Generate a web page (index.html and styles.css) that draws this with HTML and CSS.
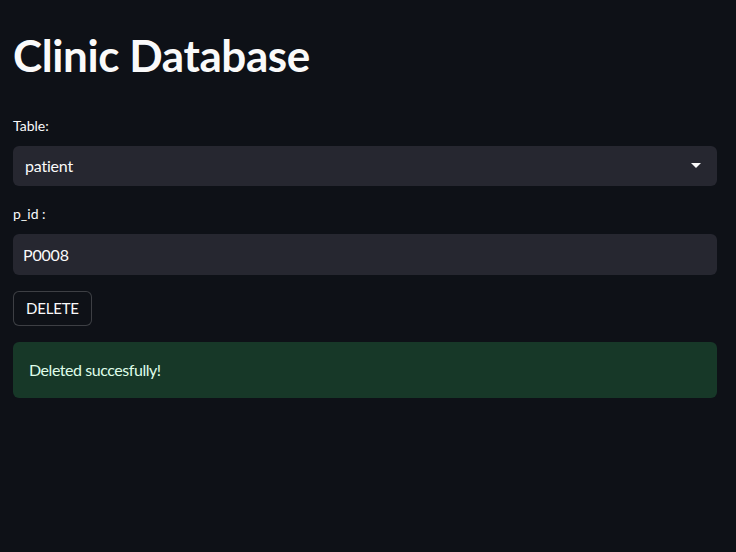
FILE: index.html
```html
<!DOCTYPE html>
<html>
<head>
<meta charset="utf-8">
<link rel="stylesheet" href="styles.css">
</head>
<body>
<main class="main">
  <h1 class="title">Clinic Database</h1>
  <div class="widget">
    <label class="label">Table:</label>
    <div class="select">
      <span class="value">patient</span>
      <svg class="caret" width="10" height="6" viewBox="0 0 10 6"><path d="M0 0 L10 0 L5 5 Z" fill="#fafafa"/></svg>
    </div>
  </div>
  <div class="widget">
    <label class="label">p_id :</label>
    <div class="input"><span class="value">P0008</span></div>
  </div>
  <div class="widget">
    <button class="button">DELETE</button>
  </div>
  <div class="alert">Deleted succesfully!</div>
</main>
</body>
</html>
```
FILE: styles.css
```css
html, body {
  margin: 0;
  padding: 0;
  background: #0e1117;
  color: #fafafa;
  font-family: Lato, "Open Sans", sans-serif;
}
.main {
  width: 704px;
  margin-left: 13px;
  padding-top: 9px;
  display: flex;
  flex-direction: column;
  gap: 16px;
}
.title {
  margin: 0;
  padding: 20px 0 16px;
  font-size: 44px;
  line-height: 52.8px;
  font-weight: 700;
  letter-spacing: -0.4px;
}
.widget {
  display: flex;
  flex-direction: column;
  align-items: flex-start;
}
.label {
  font-size: 14px;
  line-height: 24px;
  margin-bottom: 8px;
}
.select, .input {
  width: 100%;
  box-sizing: border-box;
  height: 40px;
  background: #262730;
  border-radius: 6px;
  display: flex;
  align-items: center;
  font-size: 16px;
  letter-spacing: -0.2px;
}
.select {
  padding: 0 16px 0 12px;
  justify-content: space-between;
}
.input {
  height: 41px;
  padding: 0 10px;
}
.button {
  height: 35px;
  padding: 0 12px;
  background: #0e1117;
  color: #fafafa;
  border: 1px solid rgba(250,250,250,0.2);
  border-radius: 6px;
  font-family: inherit;
  font-size: 15px;
  letter-spacing: -0.2px;
}
.alert {
  background: #173828;
  color: #dffde9;
  border-radius: 6px;
  padding: 15px 16px 16px;
  font-size: 16px;
  line-height: 25px;
  letter-spacing: -0.45px;
}
```
